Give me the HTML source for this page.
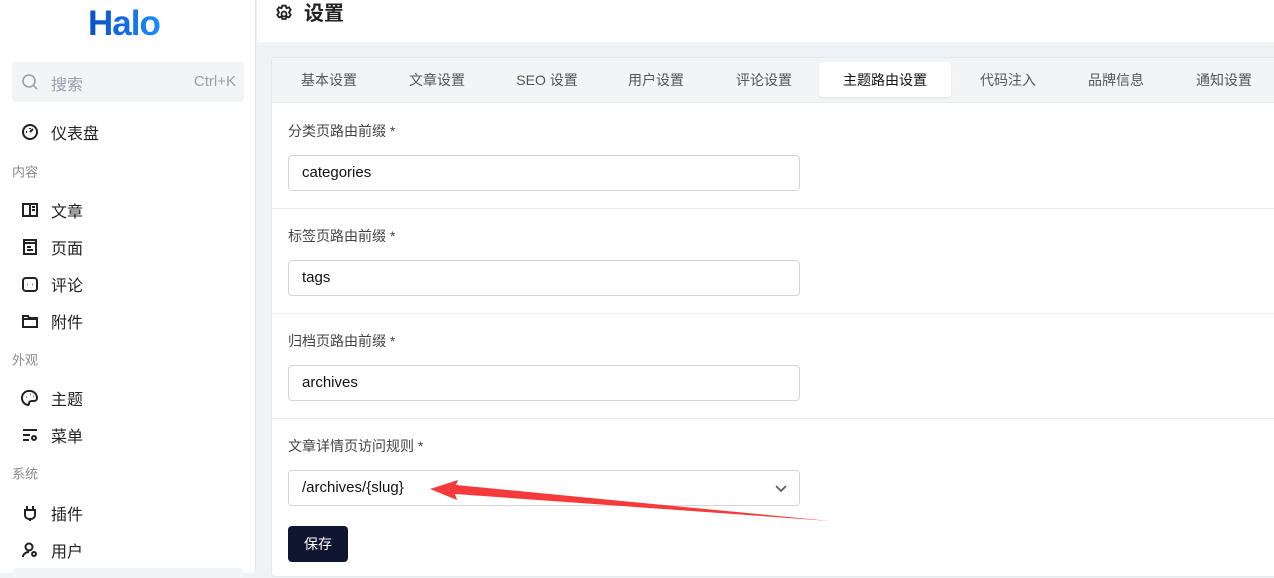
<!DOCTYPE html>
<html><head><meta charset="utf-8"><style>
*{margin:0;padding:0;box-sizing:border-box}
body{width:1274px;height:573px;overflow:hidden;font-family:"Liberation Sans","Noto Sans CJK SC",sans-serif;background:#eff3f6;position:relative;color:#333}
.side{position:absolute;left:0;top:0;width:256px;height:573px;background:#fff;border-right:1px solid #e5e7eb}
.logo{position:absolute;left:88px;top:4px;font-size:35px;font-weight:bold;background:linear-gradient(90deg,#0a4fc4,#1a8cff);-webkit-background-clip:text;color:transparent;letter-spacing:-1px}
.search{position:absolute;left:12px;top:62px;width:232px;height:40px;background:#f3f4f6;border-radius:4px;color:#9aa0a8;font-size:16px}
.nav{position:absolute;left:51px;font-size:16px;color:#222;transform:translateY(-50%)}
.ic{position:absolute;left:21px;}
.grp{position:absolute;left:12px;font-size:13px;color:#888;transform:translateY(-50%)}
.head{position:absolute;left:257px;top:0;right:0;height:42px;background:#fff}
.card{position:absolute;left:271px;top:57px;width:1010px;height:520px;background:#fff;border:1px solid #e5e7eb;border-radius:4px}
.tabs{position:absolute;left:0;top:0;right:0;height:45px;background:#f3f4f6;border-bottom:1px solid #e5e7eb}
.tab{position:absolute;top:22px;transform:translate(-50%,-50%);font-size:14px;color:#555;white-space:nowrap}
.act{position:absolute;left:547px;top:4px;width:132px;height:35px;background:#fff;border-radius:3px;box-shadow:0 1px 2px rgba(0,0,0,.08)}
.lbl{position:absolute;left:16px;font-size:14px;color:#444;transform:translateY(-50%)}
.inp{position:absolute;left:16px;width:512px;height:36px;border:1px solid #d1d5db;border-radius:4px;font-size:15px;color:#111;padding-left:13px;line-height:34px}
.sep{position:absolute;left:0;right:0;height:1px;background:#e9ebee}
.btn{position:absolute;left:16px;top:468px;width:60px;height:36px;background:#0f1730;border-radius:4px;color:#fff;font-size:14px;text-align:center;line-height:36px}
</style></head><body>
<div class="side">
 <div class="logo">Halo</div>
 <div class="search">
  <svg style="position:absolute;left:9px;top:11px" width="18" height="18" viewBox="0 0 18 18" fill="none" stroke="#9aa0a8" stroke-width="1.6"><circle cx="8" cy="8" r="6"/><path d="M13 13l3 3"/></svg>
  <span style="position:absolute;left:39px;top:9px">搜索</span>
  <span style="position:absolute;right:8px;top:11px;font-size:15px">Ctrl+K</span>
 </div>
 <svg class="ic" style="top:123px" width="18" height="18" viewBox="0 0 18 18" fill="none" stroke="#222" stroke-width="2"><circle cx="9" cy="9" r="7"/><path d="M9 9l3-3M5 9h1M9 5v1"/></svg><div class="nav" style="top:132px">仪表盘</div>
 <div class="grp" style="top:171px">内容</div>
 <svg class="ic" style="top:201px" width="18" height="18" viewBox="0 0 18 18" fill="none" stroke="#222" stroke-width="2"><rect x="2" y="3" width="14" height="12"/><path d="M9 3v12M11 6h3M11 9h3"/></svg><div class="nav" style="top:210px">文章</div>
 <svg class="ic" style="top:238px" width="18" height="18" viewBox="0 0 18 18" fill="none" stroke="#222" stroke-width="2"><rect x="3" y="2" width="12" height="14"/><path d="M3 5h12M6 9h4M6 12h6"/></svg><div class="nav" style="top:247px">页面</div>
 <svg class="ic" style="top:275px" width="18" height="18" viewBox="0 0 18 18" fill="none" stroke="#222" stroke-width="2"><rect x="2" y="3" width="14" height="13" rx="3"/><path d="M6.5 9.5h.5M11 9.5h.5"/></svg><div class="nav" style="top:284px">评论</div>
 <svg class="ic" style="top:312px" width="18" height="18" viewBox="0 0 18 18" fill="none" stroke="#222" stroke-width="2"><path d="M2 4h5l1 2h8v9H2zM2 7h14"/></svg><div class="nav" style="top:321px">附件</div>
 <div class="grp" style="top:359px">外观</div>
 <svg class="ic" style="top:389px" width="18" height="18" viewBox="0 0 18 18" fill="none" stroke="#222" stroke-width="2"><path d="M9 2a7 7 0 0 0-2 14c1 0 1-1 1-2s1-2 3-2h2a3 3 0 0 0 3-3A7 7 0 0 0 9 2z"/><path d="M5.5 8h.5M9 5.5h.5M12 7.5h.5"/></svg><div class="nav" style="top:398px">主题</div>
 <svg class="ic" style="top:426px" width="18" height="18" viewBox="0 0 18 18" fill="none" stroke="#222" stroke-width="2"><path d="M2 4h14M2 9h7M2 14h6"/><circle cx="13" cy="12" r="2"/></svg><div class="nav" style="top:435px">菜单</div>
 <div class="grp" style="top:473px">系统</div>
 <svg class="ic" style="top:504px" width="18" height="18" viewBox="0 0 18 18" fill="none" stroke="#222" stroke-width="2"><path d="M6 2v4M12 2v4M4 6h10v5a4 4 0 0 1-4 4H8a4 4 0 0 1-4-4zM9 15v2"/></svg><div class="nav" style="top:513px">插件</div>
 <svg class="ic" style="top:541px" width="18" height="18" viewBox="0 0 18 18" fill="none" stroke="#222" stroke-width="2"><circle cx="8" cy="6" r="3.5"/><path d="M2 16c0-3 3-5 6-5"/><circle cx="13" cy="13" r="2"/></svg><div class="nav" style="top:550px">用户</div>
 <div style="position:absolute;left:12px;top:568px;width:232px;height:10px;background:#f3f4f6;border-radius:4px"></div>
</div>
<div class="head">
 <svg style="position:absolute;left:17px;top:4px" width="20" height="20" viewBox="0 0 24 24" fill="none" stroke="#222" stroke-width="2.2"><path d="M10 2h4l1 3 3-1 2 3-2 3 2 3-2 3-3-1-1 3h-4l-1-3-3 1-2-3 2-3-2-3 2-3 3 1z"/><circle cx="12" cy="12" r="3"/></svg>
 <span style="position:absolute;left:47px;top:0;line-height:28px;font-size:20px;font-weight:bold;color:#222">设置</span>
</div>
<div class="card">
 <div class="tabs">
  <div class="act"></div>
  <div class="tab" style="left:57px">基本设置</div>
  <div class="tab" style="left:165px">文章设置</div>
  <div class="tab" style="left:275px">SEO 设置</div>
  <div class="tab" style="left:384px">用户设置</div>
  <div class="tab" style="left:492px">评论设置</div>
  <div class="tab" style="left:613px;color:#111">主题路由设置</div>
  <div class="tab" style="left:736px">代码注入</div>
  <div class="tab" style="left:844px">品牌信息</div>
  <div class="tab" style="left:952px">通知设置</div>
 </div>
 <div class="lbl" style="top:73px">分类页路由前缀 *</div>
 <div class="inp" style="top:97px">categories</div>
 <div class="sep" style="top:150px"></div>
 <div class="lbl" style="top:178px">标签页路由前缀 *</div>
 <div class="inp" style="top:202px">tags</div>
 <div class="sep" style="top:255px"></div>
 <div class="lbl" style="top:283px">归档页路由前缀 *</div>
 <div class="inp" style="top:307px">archives</div>
 <div class="sep" style="top:360px"></div>
 <div class="lbl" style="top:388px">文章详情页访问规则 *</div>
 <div class="inp" style="top:412px">/archives/{slug}
  <svg style="position:absolute;right:12px;top:12px" width="12" height="10" viewBox="0 0 12 10" fill="none" stroke="#555" stroke-width="1.6"><path d="M1 3l5 5 5-5"/></svg>
 </div>
 <div class="btn">保存</div>
</div>
<svg style="position:absolute;left:0;top:0" width="1274" height="573"><path d="M430 489L458 480L456 485L830 521L455 494L457 500Z" fill="#f43a3a"/></svg>
</body></html>
